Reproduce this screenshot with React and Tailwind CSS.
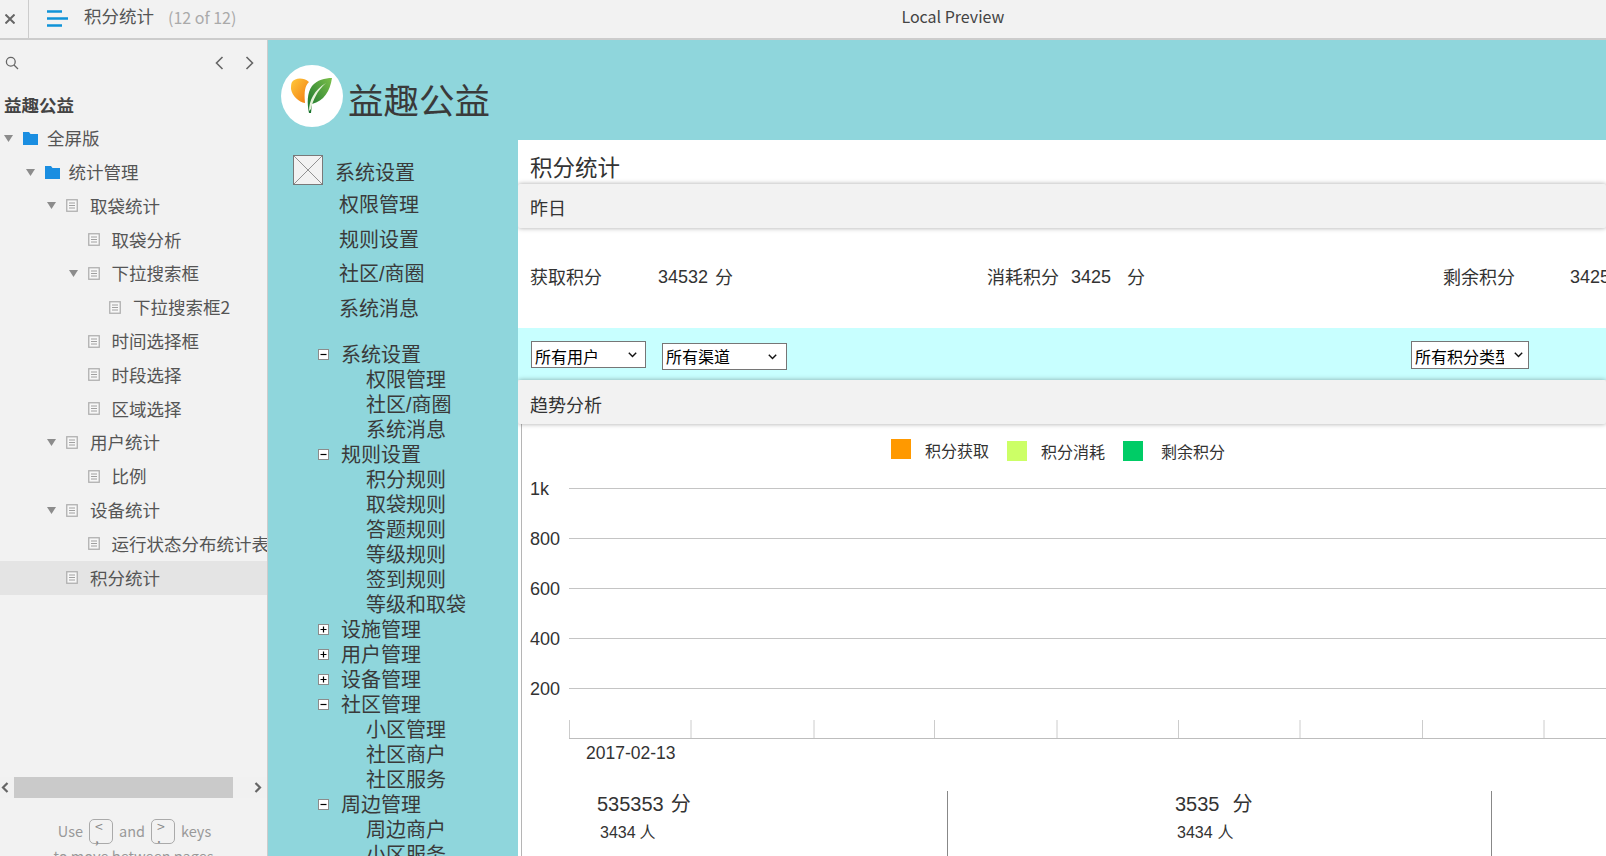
import React from "react";

const tree = [
  { t: "全屏版", l: 0, folder: true, open: true },
  { t: "统计管理", l: 1, folder: true, open: true },
  { t: "取袋统计", l: 2, open: true },
  { t: "取袋分析", l: 3 },
  { t: "下拉搜索框", l: 3, open: true },
  { t: "下拉搜索框2", l: 4 },
  { t: "时间选择框", l: 3 },
  { t: "时段选择", l: 3 },
  { t: "区域选择", l: 3 },
  { t: "用户统计", l: 2, open: true },
  { t: "比例", l: 3 },
  { t: "设备统计", l: 2, open: true },
  { t: "运行状态分布统计表", l: 3 },
  { t: "积分统计", l: 2, active: true },
];

const navTree = [
  { t: "系统设置", box: "-" },
  { t: "权限管理" },
  { t: "社区/商圈" },
  { t: "系统消息" },
  { t: "规则设置", box: "-" },
  { t: "积分规则" },
  { t: "取袋规则" },
  { t: "答题规则" },
  { t: "等级规则" },
  { t: "签到规则" },
  { t: "等级和取袋" },
  { t: "设施管理", box: "+" },
  { t: "用户管理", box: "+" },
  { t: "设备管理", box: "+" },
  { t: "社区管理", box: "-" },
  { t: "小区管理" },
  { t: "社区商户" },
  { t: "社区服务" },
  { t: "周边管理", box: "-" },
  { t: "周边商户" },
  { t: "小区服务" },
];

const gridYs = [18.5, 68.5, 118.5, 168.5, 218.5];
const gridLabels = ["1k", "800", "600", "400", "200"];
const tickXs = [47.5, 169, 292, 412.5, 535, 656.5, 778, 900.5, 1022];

function Triangle() {
  return (
    <svg width="9" height="7" viewBox="0 0 9 7">
      <path d="M0 0H9L4.5 7Z" fill="#8c8c8c" />
    </svg>
  );
}

function Folder() {
  return (
    <svg width="15" height="13" viewBox="0 0 15 13">
      <path d="M0 0H6L7.5 2H15V13H0Z" fill="#1a8ee1" />
    </svg>
  );
}

function Doc() {
  return (
    <svg width="12" height="13" viewBox="0 0 12 13" fill="none">
      <rect x="0.75" y="0.75" width="10.5" height="11.5" stroke="#b0b0b0" strokeWidth="1.3" fill="#f7f7f7" />
      <path d="M3 4H9M3 6.5H9M3 9H9" stroke="#a0a0a0" strokeWidth="1" />
    </svg>
  );
}

function TreeRow({ item }) {
  return (
    <div
      className={`flex h-[33.8px] items-center whitespace-nowrap ${item.active ? "bg-[#e4e4e4]" : ""}`}
      style={{ paddingLeft: 4 + 21.5 * item.l }}
    >
      <span className="flex w-[19px] shrink-0 items-center">{item.open && <Triangle />}</span>
      <span className="flex w-[24px] shrink-0 items-center">{item.folder ? <Folder /> : <Doc />}</span>
      <span className="text-[17.5px] text-[#555555]">{item.t}</span>
    </div>
  );
}

function PlusMinus({ kind }) {
  return (
    <svg width="11" height="11" viewBox="0 0 11 11" className="shrink-0">
      <rect x="0.5" y="0.5" width="10" height="10" fill="#ffffff" stroke="#8c8c8c" />
      <path d={kind === "+" ? "M2.5 5.5H8.5M5.5 2.5V8.5" : "M2.5 5.5H8.5"} stroke="#000000" strokeWidth="1.2" />
    </svg>
  );
}

function Key({ top, bottom }) {
  return (
    <span className="mx-[6px] inline-flex h-[25px] w-[24px] flex-col rounded-[5px] border border-[#aaaaaa] pl-[5px] pt-[1px] text-[14px] leading-[11px] text-[#888888]">
      <span>{top}</span>
      <span>{bottom}</span>
    </span>
  );
}

function Sidebar() {
  return (
    <aside className="flex h-full w-[268px] shrink-0 flex-col overflow-hidden border-r border-[#cccccc] bg-[#f2f2f2]">
      <div className="flex h-[44px] shrink-0 items-center pl-[5px] pt-[2px]">
        <svg width="14" height="14" viewBox="0 0 14 14" fill="none" stroke="#666666" strokeWidth="1.3">
          <circle cx="5.8" cy="5.8" r="4.4" />
          <path d="M9 9L13 13" />
        </svg>
        <svg width="9" height="14" viewBox="0 0 9 14" fill="none" stroke="#666666" strokeWidth="1.6" className="ml-[196px]">
          <path d="M7.5 1L1.5 7L7.5 13" />
        </svg>
        <svg width="9" height="14" viewBox="0 0 9 14" fill="none" stroke="#666666" strokeWidth="1.6" className="ml-[21px]">
          <path d="M1.5 1L7.5 7L1.5 13" />
        </svg>
      </div>
      <div className="flex h-[37.4px] shrink-0 items-center pl-[4px] pt-[4px] text-[17.5px] font-bold text-[#444444]">益趣公益</div>
      <div className="shrink-0">
        {tree.map((item) => (
          <TreeRow key={item.t} item={item} />
        ))}
      </div>
      <div className="mt-[182px] flex h-[21px] shrink-0 items-center justify-between bg-[#f1f1f1] pl-[1px] pr-[5px]">
        <svg width="8" height="11" viewBox="0 0 8 11" fill="none" stroke="#666666" strokeWidth="2.2">
          <path d="M6.5 1L2 5.5L6.5 10" />
        </svg>
        <div className="ml-[5px] mr-[21px] h-full flex-1 bg-[#cacaca]" />
        <svg width="8" height="11" viewBox="0 0 8 11" fill="none" stroke="#666666" strokeWidth="2.2">
          <path d="M1.5 1L6 5.5L1.5 10" />
        </svg>
      </div>
      <div className="mt-[21px] flex shrink-0 items-center justify-center pl-[2px] text-[14.5px] text-[#999999]">
        Use <Key top="<" bottom="," /> and <Key top=">" bottom="." /> keys
      </div>
      <div className="mt-px shrink-0 text-center text-[14.5px] text-[#999999]">to move between pages</div>
    </aside>
  );
}

function SectionHeader({ children, shift }) {
  return (
    <div className={`relative z-10 flex h-[44px] shrink-0 items-center rounded-[2px] bg-[#f2f2f2] pl-[12px] text-[18px] text-[#333333] shadow-[0_0_5px_rgba(0,0,0,0.35)] ${shift}`}>
      {children}
    </div>
  );
}

function Logo() {
  return (
    <div className="flex h-[62px] w-[62px] shrink-0 items-center justify-center rounded-full bg-white">
      <svg width="44" height="38" viewBox="0 0 44 38">
        <defs>
          <linearGradient id="orange" x1="0" y1="0" x2="1" y2="1">
            <stop offset="0" stopColor="#ffc93c" />
            <stop offset="1" stopColor="#f27a10" />
          </linearGradient>
          <linearGradient id="green" x1="1" y1="0" x2="0" y2="1">
            <stop offset="0" stopColor="#7cc04a" />
            <stop offset="1" stopColor="#14702c" />
          </linearGradient>
        </defs>
        <path d="M2 5C5 1 13 0 19 5C15 9 14 14 15 26C9 25 2 19 1 12C1 9 1 7 2 5Z" fill="url(#orange)" />
        <path d="M42 1C40 14 34 24 22 27L21 36L19 36C17 26 17 16 22 9C27 3 35 1 42 1Z" fill="url(#green)" />
        <path d="M19 34C19 24 24 13 36 6C27 14 23 23 21 32Z" fill="#e6f3da" />
      </svg>
    </div>
  );
}

function LeftNav() {
  return (
    <nav className="h-full w-[250px] shrink-0 overflow-hidden pt-[15px] text-[20px] text-[#3a3a3a]">
      <div className="flex h-[30px] items-end pl-[25px]">
        <svg width="30" height="30" viewBox="0 0 30 30" className="shrink-0">
          <rect x="0.5" y="0.5" width="29" height="29" fill="#f2f2f2" stroke="#797979" />
          <path d="M1 1L29 29M29 1L1 29" stroke="#797979" strokeWidth="0.8" />
        </svg>
        <span className="ml-[12px] leading-[24px]">系统设置</span>
      </div>
      <div className="mt-[2.6px] pl-[71px]">
        {["权限管理", "规则设置", "社区/商圈", "系统消息"].map((t) => (
          <div key={t} className="flex h-[34.7px] items-center whitespace-nowrap">
            {t}
          </div>
        ))}
      </div>
      <div className="mt-[16px] pl-[50px]">
        {navTree.map((n, i) => (
          <div key={i} className="flex h-[25px] items-center whitespace-nowrap">
            {n.box ? (
              <>
                <PlusMinus kind={n.box} />
                <span className="ml-[12px]">{n.t}</span>
              </>
            ) : (
              <span className="ml-[48px]">{n.t}</span>
            )}
          </div>
        ))}
      </div>
    </nav>
  );
}

function Chart() {
  return (
    <svg width="1084" height="300" viewBox="0 0 1084 300" className="block shrink-0">
      {gridYs.map((y, i) => (
        <g key={y}>
          <line x1="47" x2="1084" y1={y} y2={y} stroke="#c4c4c4" strokeWidth="1" />
          <text x="8" y={y + 6.5} fontSize="18" fill="#333333">{gridLabels[i]}</text>
        </g>
      ))}
      {tickXs.map((x) => (
        <line key={x} x1={x} x2={x} y1="250" y2="268" stroke="#cccccc" strokeWidth="1" />
      ))}
      <line x1="47" x2="1084" y1="268.5" y2="268.5" stroke="#bdbdbd" strokeWidth="1.2" />
      <text x="64" y="288.5" fontSize="17.5" fill="#333333">2017-02-13</text>
    </svg>
  );
}

function Legend() {
  return (
    <div className="flex h-[46px] shrink-0 items-start pl-[369px] text-[16px] text-[#333333]">
      <span className="mt-[15px] h-[20px] w-[20px] bg-[#ff9900]" />
      <span className="ml-[14px] mt-[16px] w-[82px] leading-[24px]">积分获取</span>
      <span className="mt-[17px] h-[20px] w-[20px] bg-[#ccff66]" />
      <span className="ml-[14px] mt-[17px] w-[82px] leading-[24px]">积分消耗</span>
      <span className="mt-[17px] h-[20px] w-[20px] bg-[#00cc66]" />
      <span className="ml-[18px] mt-[17px] leading-[24px]">剩余积分</span>
    </div>
  );
}

function BottomStats() {
  return (
    <div className="flex shrink-0 pt-[21px] text-[#333333]">
      <div className="h-[86px] w-[426px] shrink-0 border-r border-[#888888] pl-[75px]">
        <div className="flex h-[25px] items-center text-[20px]">
          <span>535353</span>
          <span className="ml-[7px]">分</span>
        </div>
        <div className="mt-[4px] flex h-[25px] items-center pl-[3px] text-[16px]">
          <span>3434</span>
          <span className="ml-[4px]">人</span>
        </div>
        <div className="mt-[8px] pl-[3px] text-[16px]">人均获取</div>
      </div>
      <div className="h-[86px] w-[544px] shrink-0 border-r border-[#888888] pl-[227px]">
        <div className="flex h-[25px] items-center text-[20px]">
          <span>3535</span>
          <span className="ml-[13px]">分</span>
        </div>
        <div className="mt-[4px] flex h-[25px] items-center pl-[2px] text-[16px]">
          <span>3434</span>
          <span className="ml-[5px]">人</span>
        </div>
        <div className="mt-[8px] pl-[2px] text-[16px]">人均消耗</div>
      </div>
    </div>
  );
}

function Chevron({ place }) {
  return (
    <svg width="9" height="6" viewBox="0 0 9 6" fill="none" stroke="#111111" strokeWidth="1.4" className={`pointer-events-none absolute top-[11px] ${place}`}>
      <path d="M0.8 0.8L4.5 4.6L8.2 0.8" />
    </svg>
  );
}

function Panel() {
  return (
    <section className="flex h-full w-[1088px] shrink-0 flex-col overflow-hidden bg-white">
      <div className="flex h-[44px] shrink-0 items-center pl-[12px] pt-[13px] text-[22.5px] text-[#333333]">积分统计</div>
      <SectionHeader shift="pt-[6px]">昨日</SectionHeader>
      <div className="flex h-[100px] shrink-0 items-center whitespace-nowrap pl-[12px] text-[18px] text-[#333333]">
        <span className="w-[128px] shrink-0">获取积分</span>
        <span className="w-[57px] shrink-0 -translate-y-px">34532</span>
        <span className="w-[272px] shrink-0">分</span>
        <span className="w-[84px] shrink-0">消耗积分</span>
        <span className="w-[56px] shrink-0 -translate-y-px">3425</span>
        <span className="w-[316px] shrink-0">分</span>
        <span className="w-[127px] shrink-0">剩余积分</span>
        <span className="shrink-0 -translate-y-px">3425</span>
      </div>
      <div className="flex h-[52px] shrink-0 items-start bg-[#c8ffff] text-[16px] text-black">
        <div className="relative ml-[13px] mt-[13px] h-[27px] w-[115px]">
          <select className="h-full w-full appearance-none border border-[#767676] bg-white pl-[3px] pr-[24px] pt-[4px]">
            <option>所有用户</option>
          </select>
          <Chevron place="right-[9px]" />
        </div>
        <div className="relative ml-[16px] mt-[15px] h-[27px] w-[125px]">
          <select className="h-full w-full appearance-none border border-[#767676] bg-white pl-[3px] pr-[24px] pt-[2px]">
            <option>所有渠道</option>
          </select>
          <Chevron place="right-[10px]" />
        </div>
        <div className="relative ml-[624px] mt-[13px] h-[28px] w-[118px]">
          <select className="h-full w-full appearance-none border border-[#767676] bg-white pl-[3px] pr-[24px] pt-[4px]">
            <option>所有积分类型</option>
          </select>
          <Chevron place="right-[6px]" />
        </div>
      </div>
      <SectionHeader shift="pt-[9px]">趋势分析</SectionHeader>
      <div className="ml-[3px] flex flex-1 flex-col border-l border-[#b5b5b5] bg-white">
        <Legend />
        <Chart />
        <BottomStats />
      </div>
    </section>
  );
}

export default function App() {
  return (
    <div className="flex h-[856px] w-[1606px] flex-col overflow-hidden bg-[#f2f2f2] font-['Noto_Sans_CJK_SC',sans-serif]">
      <header className="flex h-[40px] shrink-0 items-center border-b-2 border-[#cccccc] bg-[#f2f2f2]">
        <div className="flex h-full w-[29px] shrink-0 items-center justify-center border-r border-[#cccccc] pr-[9px]">
          <svg width="10" height="10" viewBox="0 0 10 10" stroke="#666666" strokeWidth="2">
            <path d="M0.5 0.5L9.5 9.5M9.5 0.5L0.5 9.5" />
          </svg>
        </div>
        <svg width="21" height="18" viewBox="0 0 21 18" fill="none" stroke="#0f93d8" strokeWidth="2.5" className="ml-[18px]">
          <path d="M0 1.5H15M0 8.5H21M0 15.5H15" />
        </svg>
        <span className="mb-[5px] ml-[16px] text-[17.5px] text-[#555555]">积分统计</span>
        <span className="mb-[5px] ml-[14px] text-[16px] text-[#aaaaaa]">(12 of 12)</span>
        <span className="mb-[6px] ml-[665px] text-[16px] text-[#444444]">Local Preview</span>
      </header>
      <div className="flex min-h-0 flex-1">
        <Sidebar />
        <main className="flex min-w-0 flex-1 flex-col overflow-hidden bg-[#8fd6dc] font-['Liberation_Sans','Noto_Sans_CJK_SC',sans-serif]">
          <div className="flex h-[100px] shrink-0 items-start pl-[13px] pt-[25px]">
            <Logo />
            <span className="ml-[5px] mt-[11px] whitespace-nowrap text-[35.5px] leading-[52px] text-[#3a3a3a]">益趣公益</span>
          </div>
          <div className="flex min-h-0 flex-1">
            <LeftNav />
            <Panel />
          </div>
        </main>
      </div>
    </div>
  );
}
